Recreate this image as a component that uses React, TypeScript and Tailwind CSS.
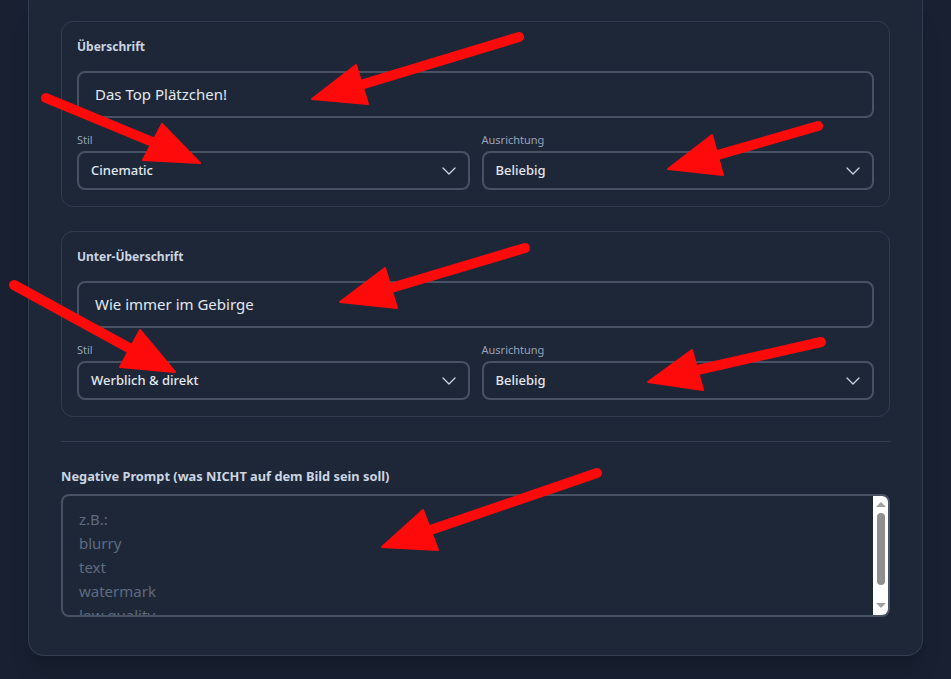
import React from 'react';
import { ChevronDown } from 'lucide-react';

const font = { fontFamily: '"Noto Sans", "Open Sans", Arial, sans-serif' };

type Arrow = { tail: [number, number]; tip: [number, number]; a: [number, number]; b: [number, number] };

// Red callout arrows on top of the form
const arrows: Arrow[] = [
  { tail: [519, 37], tip: [312, 99], a: [356, 65], b: [368, 104] },
  { tail: [46, 98], tip: [200, 163], a: [162, 124], b: [143, 160] },
  { tail: [818, 126], tip: [668, 169], a: [712, 135], b: [723, 175] },
  { tail: [525, 248], tip: [340, 302], a: [385, 268], b: [397, 308] },
  { tail: [14, 285], tip: [175, 372], a: [140, 330], b: [120, 367] },
  { tail: [821, 342], tip: [648, 382], a: [692, 350], b: [703, 390] },
  { tail: [597, 473], tip: [382, 547], a: [423, 510], b: [438, 550] },
];

const ArrowLayer = () => (
  <svg className="pointer-events-none absolute left-0 top-0" width={951} height={679} viewBox="0 0 951 679">
    {arrows.map((ar, i) => {
      const mx = (ar.a[0] + ar.b[0]) / 2;
      const my = (ar.a[1] + ar.b[1]) / 2;
      return (
        <g key={i} fill="#ff0a0a" stroke="#ff0a0a">
          <line x1={ar.tail[0]} y1={ar.tail[1]} x2={mx} y2={my} strokeWidth={10} strokeLinecap="round" />
          <polygon points={`${ar.tip[0]},${ar.tip[1]} ${ar.a[0]},${ar.a[1]} ${ar.b[0]},${ar.b[1]}`} strokeWidth={2} strokeLinejoin="round" />
        </g>
      );
    })}
  </svg>
);

const Select = ({ label, value }: { label: string; value: string }) => (
  <div className="flex flex-col">
    <span className="mb-[3px] text-[11px] leading-[16px] text-[#94a3b8]">{label}</span>
    <div className="flex h-[39px] items-center justify-between rounded-lg border-2 border-[#475264] bg-[#1e2738] pl-3 pr-[7px]">
      <span className="text-[13px] font-medium text-[#e2e8f0]">{value}</span>
      <ChevronDown size={24} strokeWidth={1.3} className="text-[#cbd5e1]" />
    </div>
  </div>
);

const TextBlock = ({ title, text, style }: { title: string; text: string; style: string }) => (
  <div className="rounded-xl border border-[#323c4f] px-[15px] pb-4 pt-4">
    <div className="mb-[15px] text-[12px] font-bold leading-[18px] text-[#cbd5e1]">{title}</div>
    <div className="flex h-[47px] items-center rounded-lg border-2 border-[#475264] px-4 text-[15px] text-[#e2e8f0]">{text}</div>
    <div className="mt-[14px] grid grid-cols-2 gap-3">
      <Select label="Stil" value={style} />
      <Select label="Ausrichtung" value="Beliebig" />
    </div>
  </div>
);

export default function App() {
  return (
    <div className="relative h-[679px] w-[951px] overflow-hidden bg-[#182031]" style={font}>
      <div className="ml-[28px] w-[895px] rounded-b-2xl border-x border-b border-[#333d50] bg-[#1e2738] px-[32px] pb-[38px] pt-[21px] shadow-xl">
        <div className="flex flex-col gap-6">
          <TextBlock title="Überschrift" text="Das Top Plätzchen!" style="Cinematic" />
          <TextBlock title="Unter-Überschrift" text="Wie immer im Gebirge" style="Werblich & direkt" />
        </div>
        <div className="mt-6 border-t border-[#333d50]" />
        <div className="mb-[9px] mt-[25px] text-[12.8px] font-bold leading-[18px] text-[#cbd5e1]">
          Negative Prompt (was NICHT auf dem Bild sein soll)
        </div>
        <div className="relative h-[123px] overflow-hidden rounded-lg border-2 border-[#475264]">
          <textarea
            readOnly
            className="h-full w-full resize-none overflow-hidden bg-transparent px-4 pt-[11px] text-[15px] leading-[24px] text-[#e2e8f0] outline-none placeholder:text-[#5f6b80]"
            placeholder={'z.B.:\nblurry\ntext\nwatermark\nlow quality'}
          />
          {/* classic scrollbar */}
          <div className="absolute bottom-0 right-0 top-0 flex w-[15px] flex-col items-center bg-white">
            <div className="mt-[6px] h-0 w-0 border-x-[5px] border-b-[5px] border-x-transparent border-b-[#a0a0a0]" />
            <div className="mt-[6px] h-[72px] w-[8px] rounded-full bg-[#8f8f8f]" />
            <div className="flex-1" />
            <div className="mb-[7px] h-0 w-0 border-x-[5px] border-t-[5px] border-x-transparent border-t-[#a0a0a0]" />
          </div>
        </div>
      </div>
      <ArrowLayer />
    </div>
  );
}
